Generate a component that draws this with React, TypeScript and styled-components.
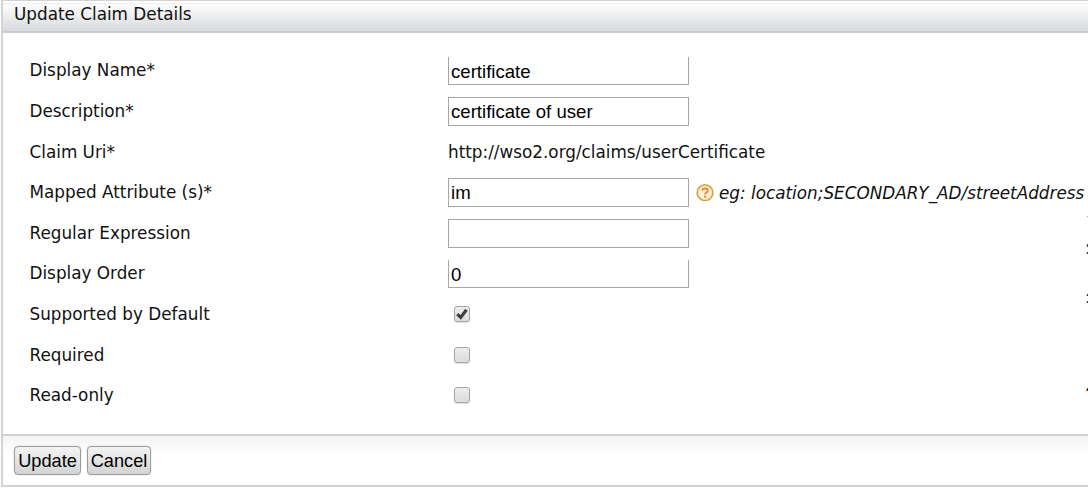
import React from "react";
import styled, { createGlobalStyle } from "styled-components";

const GlobalStyle = createGlobalStyle`
  * { box-sizing: border-box; }
  body { margin: 0; background: #fff; overflow: hidden; }
`;

const Page = styled.main`
  position: relative;
  width: 1088px;
  height: 489px;
  overflow: hidden;
  padding-left: 1px;
  font-family: "DejaVu Sans", sans-serif;
  font-size: 16.82px;
  color: #111;
  white-space: nowrap;
`;

const Panel = styled.form`
  height: 487px;
  display: flex;
  flex-direction: column;
  border: solid #d3d3d3;
  border-width: 1px 0 2px 2px;
`;

const Header = styled.header`
  height: 32px;
  flex: none;
  padding-left: 11px;
  line-height: 27px;
  border-bottom: 2px solid #cbcccd;
  background: linear-gradient(#fff 0, #fff 2px, #f2f2f2 2px, #f2f2f2 3px, #fdfdfd 4px, #d7d9db 100%);
`;

const Fields = styled.div`
  height: 401px;
  flex: none;
  padding: 17px 0 0 26.5px;
`;

const Row = styled.div`
  display: grid;
  grid-template-columns: 418.5px 1fr;
  align-items: center;
  height: 40.625px;
`;

const Label = styled.label`
  line-height: 24px;
`;

const Value = styled.div`
  display: flex;
  align-items: center;
`;

const TextInput = styled.input<{ $open?: boolean }>`
  width: 241px;
  height: ${(p) => (p.$open ? 28 : 29)}px;
  margin: 1px 0 0;
  padding: ${(p) => (p.$open ? "3px 2px 0" : "1px 2px 0")};
  border: 1px solid #a6a6a6;
  border-top-width: ${(p) => (p.$open ? 0 : 1)}px;
  border-radius: 0;
  outline: none;
  background: #fff;
  color: #000;
  font: 18.6px "Liberation Sans", Arial, sans-serif;
`;

const Hint = styled.em`
  display: flex;
  align-items: center;
  gap: 5.5px;
  margin-left: 6.5px;
  padding-top: 1px;
`;

const Check = styled.span`
  display: grid;
  place-items: center;
  width: 16px;
  height: 16px;
  margin-left: 6px;
  border: 1px solid #a5a5a5;
  border-radius: 3px;
  background: linear-gradient(#eee, #dcdcdc);
  box-shadow: 0 1px 1px #ddd;
`;

const Footer = styled.footer`
  flex: 1;
  display: flex;
  align-items: flex-start;
  gap: 6px;
  padding: 10px 0 0 11px;
  border-top: 2px solid #d1d1d1;
  background: linear-gradient(#f3f4f4, #fff 20px);
`;

const Button = styled.button<{ $width: number }>`
  width: ${(p) => p.$width}px;
  height: 29px;
  padding: 2px 0 0;
  border: 1px solid #9c9c9c;
  border-radius: 4px;
  background: linear-gradient(#f3f3f3, #e6e6e6 45%, #d3d3d3);
  box-shadow: 0 0 1px #999;
  color: #000;
  font: 18.2px "Liberation Sans", Arial, sans-serif;
`;

const EdgeMarks = styled.svg`
  position: absolute;
  right: 0;
  top: 210px;
`;

const HelpIcon = () => (
  <svg width="18" height="18" viewBox="0 0 18 18">
    <circle cx="9" cy="8.7" r="7.9" fill="#fff6dc" stroke="#c9a24c" strokeWidth="1.5" />
    <circle cx="9" cy="8.7" r="6.6" fill="none" stroke="#f3dda0" strokeWidth="1" />
    <path d="M6.2 6.8c.2-3.2 5.6-3.2 5.6 0 0 2-2.7 1.8-2.7 3.6" fill="none" stroke="#ee8a3a" strokeWidth="2" />
    <path d="M8 11.6h2.2v2.1H8z" fill="#ee8a3a" />
  </svg>
);

const CheckBox = ({ checked = false }: { checked?: boolean }) => (
  <Check role="checkbox" aria-checked={checked}>
    {checked && (
      <svg width="12" height="12" viewBox="0 0 12 12">
        <path d="M1.3 6.2 4.7 9.4 10.5 1.8" fill="none" stroke="#3c3c3c" strokeWidth="3.2" />
      </svg>
    )}
  </Check>
);

const fields: { label: string; content: React.ReactNode }[] = [
  { label: "Display Name*", content: <TextInput $open defaultValue="certificate" /> },
  { label: "Description*", content: <TextInput defaultValue="certificate of user" /> },
  { label: "Claim Uri*", content: "http://wso2.org/claims/userCertificate" },
  {
    label: "Mapped Attribute (s)*",
    content: (
      <>
        <TextInput defaultValue="im" />
        <Hint><HelpIcon />eg: location;SECONDARY_AD/streetAddress</Hint>
      </>
    ),
  },
  { label: "Regular Expression", content: <TextInput /> },
  { label: "Display Order", content: <TextInput $open defaultValue="0" /> },
  { label: "Supported by Default", content: <CheckBox checked /> },
  { label: "Required", content: <CheckBox /> },
  { label: "Read-only", content: <CheckBox /> },
];

export default function App() {
  return (
    <Page>
      <GlobalStyle />
      <Panel>
        <Header>Update Claim Details</Header>
        <Fields>
          {fields.map((field) => (
            <Row key={field.label}>
              <Label>{field.label}</Label>
              <Value>{field.content}</Value>
            </Row>
          ))}
        </Fields>
        <Footer>
          <Button type="button" $width={67}>Update</Button>
          <Button type="button" $width={64}>Cancel</Button>
        </Footer>
      </Panel>
      <EdgeMarks width="2" height="190" shapeRendering="crispEdges">
        <path d="M1 6h1v1H1z" fill="#dba638" />
        <path d="M0 35h1v1H0zM0 42h1v2H0zM0 85h1v1H0zM0 92h1v1H0z" fill="#e4c47d" />
        <path d="M1 34h1v3H1zM1 42h1v2H1z" fill="#514043" />
        <path d="M1 84h1v2H1zM1 91h1v2H1z" fill="#4c3516" />
        <path d="M0 179h1v2H0z" fill="#d87a51" />
        <path d="M1 178h1v3H1z" fill="#673018" />
      </EdgeMarks>
    </Page>
  );
}
